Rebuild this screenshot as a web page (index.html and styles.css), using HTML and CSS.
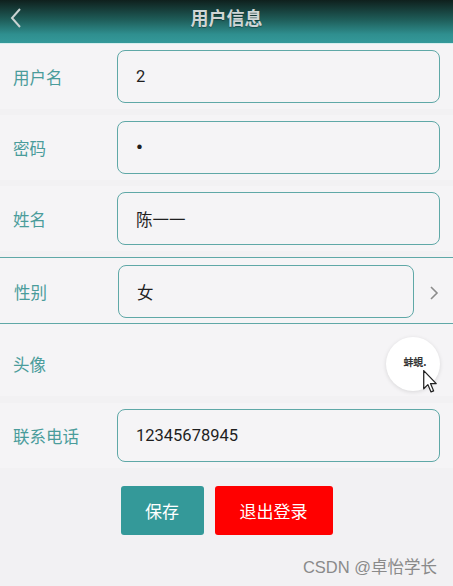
FILE: index.html
```html
<!DOCTYPE html>
<html lang="zh">
<head>
<meta charset="utf-8">
<title>用户信息</title>
<link rel="stylesheet" href="styles.css">
</head>
<body>
<div class="page">
  <header class="topbar">
    <svg class="back" width="14" height="22" viewBox="0 0 14 22"><polyline points="11,2 3,11 11,20" fill="none" stroke="#c9d3d2" stroke-width="2"/></svg>
    <h1 class="title">用户信息</h1>
  </header>

  <div class="row">
    <span class="label">用户名</span>
    <div class="field">2</div>
  </div>
  <div class="row">
    <span class="label">密码</span>
    <div class="field pwd">•</div>
  </div>
  <div class="row">
    <span class="label">姓名</span>
    <div class="field">陈一一</div>
  </div>
  <div class="row row-select">
    <span class="label">性别</span>
    <div class="field field-select">女</div>
    <svg class="chev" width="12" height="16" viewBox="0 0 12 16"><polyline points="3,2 9,8 3,14" fill="none" stroke="#8c8c8c" stroke-width="1.6"/></svg>
  </div>
  <div class="row row-avatar">
    <span class="label">头像</span>
    <div class="avatar"><span class="alt">蚌蜆.</span></div>
    <svg class="cursor" width="17" height="25" viewBox="0 0 16 24"><path d="M1.5 1.5 L1.5 19 L5.5 15 L8.5 22 L11 21 L8 14 L13.5 14 Z" fill="#fff" stroke="#222" stroke-width="1.2" stroke-linejoin="round"/></svg>
  </div>
  <div class="row">
    <span class="label">联系电话</span>
    <div class="field">12345678945</div>
  </div>

  <div class="actions">
    <button class="btn btn-save">保存</button>
    <button class="btn btn-logout">退出登录</button>
  </div>

  <div class="watermark">CSDN @卓怡学长</div>
</div>
</body>
</html>
```

FILE: styles.css
```css
* { box-sizing: border-box; }
html, body {
  margin: 0;
  padding: 0;
  background: #f2f1f3;
  font-family: "Noto Sans CJK SC", "Liberation Sans", sans-serif;
}
.page {
  position: relative;
  width: 453px;
  height: 586px;
  overflow: hidden;
  background: #f2f1f3;
}
.topbar {
  position: relative;
  height: 44px;
  background: linear-gradient(to bottom, #0f201d 0%, #1e5c58 45%, #2f8f8f 80%, #34999a 100%);
  border-bottom: 1px solid #d6eeee;
  display: flex;
  align-items: center;
  justify-content: center;
}
.back {
  position: absolute;
  left: 9px;
  top: 7px;
}
.title {
  margin: 0;
  font-size: 18px;
  font-weight: bold;
  color: #d0d6d6;
  text-shadow: 0 1px 1px rgba(0,0,0,0.35);
  margin-top: -10px;
}
.row {
  display: flex;
  align-items: center;
  background: #f5f4f6;
  padding: 6px 13px 6px 13px;
  margin-bottom: 6px;
}
.label {
  width: 104px;
  flex: none;
  font-size: 16.5px;
  color: #4a9c9b;
}
.field {
  flex: 1;
  height: 53px;
  border: 1.5px solid #5fa8a7;
  border-radius: 8px;
  display: flex;
  align-items: center;
  padding-left: 18px;
  font-family: Roboto, "Noto Sans CJK SC", sans-serif;
  font-size: 16.5px;
  color: #1f1f1f;
  background: #f5f4f6;
}
.pwd { font-size: 19px; font-weight: bold; }
.row-select {
  border-top: 1px solid #5fa8a7;
  border-bottom: 1px solid #5fa8a7;
  padding: 7px 13px 5px 13px;
  margin-bottom: 0;
}
.row-select .label { width: 105px; padding-left: 1px; }
.field-select {
  flex: none;
  width: 296px;
}
.chev {
  margin-left: 14px;
  margin-top: 3px;
}
.row-avatar {
  position: relative;
  padding: 13px 13px 5px 13px;
  margin-bottom: 7px;
  justify-content: space-between;
}
.avatar {
  width: 54px;
  height: 54px;
  border-radius: 50%;
  background: #ffffff;
  box-shadow: 0 1px 4px rgba(0,0,0,0.12);
  display: flex;
  align-items: center;
  justify-content: center;
}
.alt {
  font-size: 10px;
  font-weight: bold;
  color: #333;
  margin-top: -5px;
  margin-left: 4px;
}
.cursor {
  position: absolute;
  left: 422px;
  top: 45px;
}
.actions {
  display: flex;
  justify-content: center;
  gap: 11px;
  margin-top: 18px;
}
.btn {
  height: 49px;
  border: none;
  border-radius: 3px;
  font-family: "Noto Sans CJK SC", "Liberation Sans", sans-serif;
  font-size: 17px;
  color: #fff;
}
.btn-save {
  width: 83px;
  background: #349999;
}
.btn-logout {
  width: 118px;
  background: #ff0000;
}
.watermark {
  position: absolute;
  right: 16px;
  bottom: 8px;
  font-size: 16.5px;
  color: #8a8a8a;
  font-family: "Liberation Sans", "Noto Sans CJK SC", sans-serif;
}
```
